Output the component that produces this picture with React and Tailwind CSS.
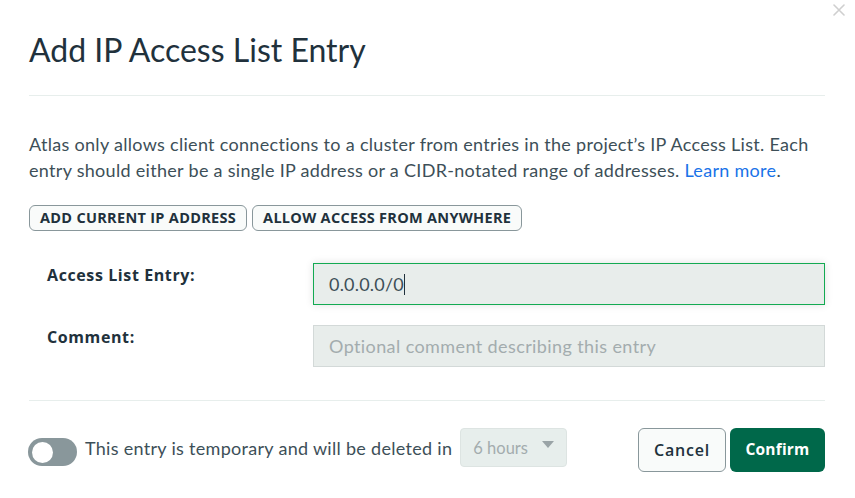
export default function App() {
  const os = { fontFamily: "'Open Sans', Lato, sans-serif" };
  return (
    <div className="relative w-[855px] h-[498px] bg-white overflow-hidden text-[#21313c]" style={{ fontFamily: "Lato, 'Noto Sans', sans-serif" }}>
      <svg className="absolute left-[833px] top-[4px]" width="12" height="12" viewBox="0 0 12 12">
        <path d="M1 1 L11 11 M11 1 L1 11" stroke="#cfcfcf" strokeWidth="1.6" strokeLinecap="round" />
      </svg>

      <div className="pl-[29px] pr-[30px]">
        <div className="pt-[31px] pb-[26px] border-b border-[#e7eeec]">
          <h1 className="text-[32px] leading-[38px] font-normal text-[#21313c]">Add IP Access List Entry</h1>
        </div>

        <p className="mt-[35px] text-[18px] leading-[26px] tracking-[0.3px] text-[#3d4f58]">
          Atlas only allows client connections to a cluster from entries in the project’s IP Access List. Each entry should either be a single IP address or a CIDR-notated range of addresses. <span className="text-[#1a73e8]">Learn more</span>.
        </p>

        <div className="mt-[22px] flex gap-[5px]" style={os}>
          <button className="h-[26px] px-[10px] rounded-[6px] border border-[#89979b] bg-[#f9fbfa] text-[14.5px] tracking-[0.3px] font-bold text-[#21313c] leading-none">ADD CURRENT IP ADDRESS</button>
          <button className="h-[26px] px-[10px] rounded-[6px] border border-[#89979b] bg-[#f9fbfa] text-[14.5px] tracking-[0.3px] font-bold text-[#21313c] leading-none">ALLOW ACCESS FROM ANYWHERE</button>
        </div>

        <div className="mt-[32px] flex flex-col gap-[20px] pb-[33px] border-b border-[#e7eeec]">
          <div className="flex items-start">
            <div className="w-[284px] pl-[18px] text-[16px] tracking-[0.6px] font-bold leading-[24px]" style={os}>Access List Entry:</div>
            <div className="flex-1 h-[42px] flex items-center px-[15px] bg-[#e8edeb] border border-[#13aa52] shadow-[0_0_8px_rgba(0,0,0,0.12)] text-[18px] tracking-[0.2px] text-[#3d4f58]">
              0.0.0.0/0<span className="inline-block w-px h-[21px] bg-[#21313c]"></span>
            </div>
          </div>
          <div className="flex items-start">
            <div className="w-[284px] pl-[18px] text-[16px] tracking-[0.6px] font-bold leading-[24px]" style={os}>Comment:</div>
            <div className="flex-1 h-[42px] flex items-center px-[15px] bg-[#e8edeb] border border-[#d3d9d8] text-[18px] tracking-[0.4px] text-[#a3acae]">
              Optional comment describing this entry
            </div>
          </div>
        </div>

        <div className="pt-[27px] flex items-start justify-between">
          <div className="flex items-start">
            <div className="mt-[10px] -ml-[1px] w-[49px] h-[28px] rounded-full bg-[#89979b] flex items-center pl-[4px]">
              <div className="w-[21px] h-[21px] rounded-full bg-white"></div>
            </div>
            <div className="mt-[7px] ml-[8px] text-[18px] leading-[26px] tracking-[0.3px] text-[#3d4f58]">This entry is temporary and will be deleted in</div>
            <div className="ml-[8px] w-[107px] h-[39px] rounded-[4px] border border-[#dde4e2] bg-[#e7eeec] flex items-center pl-[12px] pt-[2px] relative">
              <span className="text-[16.5px] text-[#a3acae]">6 hours</span>
              <svg className="absolute left-[81px] top-[12px]" width="12" height="8" viewBox="0 0 12 8">
                <path d="M0 0 L12 0 L6 7 Z" fill="#9aa4a7" />
              </svg>
            </div>
          </div>
          <div className="flex gap-[4px]" style={os}>
            <button className="w-[88px] h-[44px] rounded-[6px] border border-[#89979b] bg-[#f9fbfa] text-[16px] tracking-[0.8px] font-semibold text-[#21313c]">Cancel</button>
            <button className="w-[95px] h-[44px] rounded-[6px] bg-[#00684a] text-[15.5px] tracking-[0.2px] font-bold text-white">Confirm</button>
          </div>
        </div>
      </div>
    </div>
  );
}
